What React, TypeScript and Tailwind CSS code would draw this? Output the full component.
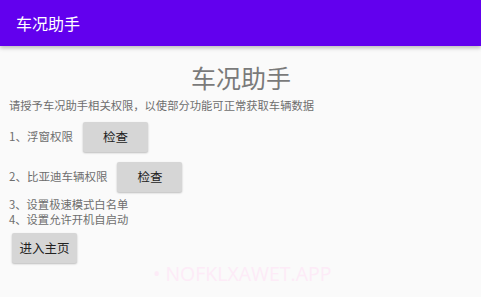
import React from "react";

const font = { fontFamily: '"Noto Sans CJK SC", "Noto Sans", Roboto, sans-serif' };

function Btn({ label, className = "" }: { label: string; className?: string }) {
  return (
    <button
      className={`w-[65px] h-[30px] bg-[#d6d6d6] rounded-[2px] shadow-[0_1px_2px_rgba(0,0,0,0.25)] text-[12.5px] leading-none text-[#222222] flex items-center justify-center ${className}`}
    >
      {label}
    </button>
  );
}

export default function App() {
  return (
    <div
      className="relative w-[481px] h-[297px] overflow-hidden bg-[#fafafa]"
      style={font}
    >
      <div className="h-[46px] bg-[#6200ee] flex items-center px-4 shadow-[0_2px_4px_rgba(0,0,0,0.25)] relative z-10">
        <span className="text-white text-[16px] leading-none">车况助手</span>
      </div>
      <div className="pl-[9px] flex flex-col">
        <div className="mt-[16px] pr-[8px] text-center text-[25px] leading-[30px] text-[#7a7a7a]">
          车况助手
        </div>
        <div className="mt-[5px] text-[11.3px] leading-[16px] text-[#6e6e6e]">
          请授予车况助手相关权限，以使部分功能可正常获取车辆数据
        </div>
        <div className="mt-[9px] flex items-center gap-[10px]">
          <span className="text-[11.5px] text-[#6e6e6e]">1、浮窗权限</span>
          <Btn label="检查" />
        </div>
        <div className="mt-[10px] flex items-center gap-[10px]">
          <span className="text-[11.5px] text-[#6e6e6e]">2、比亚迪车辆权限</span>
          <Btn label="检查" />
        </div>
        <div className="mt-[5px] text-[11.3px] leading-[15px] text-[#6e6e6e]">
          3、设置极速模式白名单
        </div>
        <div className="text-[11.3px] leading-[15px] text-[#6e6e6e]">
          4、设置允许开机自启动
        </div>
        <Btn label="进入主页" className="mt-[6px] ml-[3px]" />
      </div>
      <div className="absolute left-[153px] top-[263px] text-[19.5px] leading-[22px] text-[#fdebf7]" style={{ fontFamily: '"Open Sans", "Noto Sans", sans-serif' }}>
        • NOFKLXAWET.APP
      </div>
    </div>
  );
}
